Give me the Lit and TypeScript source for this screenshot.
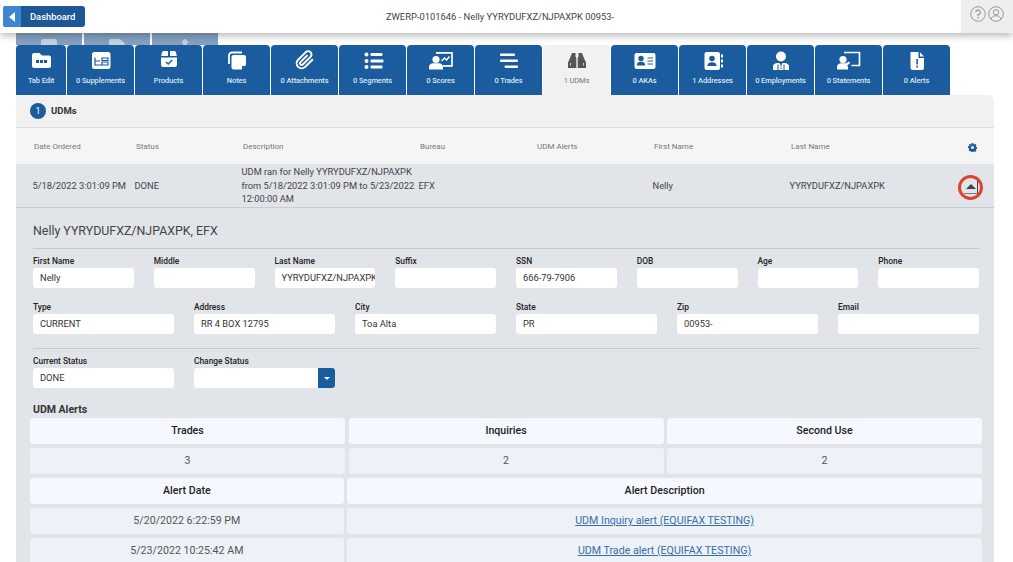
import { LitElement, html, css, svg } from "lit";
import { customElement } from "lit/decorators.js";

const B = "#1a5c9e";
const box = (c: unknown, vb = "0 0 24 20") =>
  html`<svg class="ic" viewBox=${vb} width="24" height="20" fill="#fff">${c}</svg>`;

const icons: Record<string, unknown> = {
  folder: box(svg`<path d="M3 5a2 2 0 0 1 2-2h5.500l2.500 2.500h7a2 2 0 0 1 2 2V16a2 2 0 0 1-2 2H5a2 2 0 0 1-2-2Z"/><g fill="${B}"><rect x="7" y="10" width="3" height="3"/><rect x="11" y="10" width="3" height="3"/><rect x="15" y="10" width="3" height="3"/></g>`),
  supp: box(svg`<rect x="3" y="2" width="18.500" height="17" rx="2.500"/><path d="M6 7.500V15h12.500M6 11h5M13 8h6v2.500h-6ZM13 12h6v3h-6Z" fill="none" stroke="${B}" stroke-width="1.200"/>`),
  box: box(svg`<path d="M6.500 1H11v5H4.200L5 2.500A2 2 0 0 1 6.500 1ZM13 1h4.500A2 2 0 0 1 19 2.500l.8 3.500H13Z"/><path d="M4 7.500h16V15a2 2 0 0 1-2 2H6a2 2 0 0 1-2-2Z"/><path d="M9 12l2.200 2 4-4" fill="none" stroke="${B}" stroke-width="1.400"/>`),
  notes: box(svg`<path d="M4 14V5.500A3 3 0 0 1 7 2.500h10" fill="none" stroke="#fff" stroke-width="1.800"/><path d="M8.500 5H19a2 2 0 0 1 2 2v8l-4.500 4.500H8.500a2 2 0 0 1-2-2V7a2 2 0 0 1 2-2Z"/><path d="M17 16h3.500L17 19.500Z" fill="${B}"/>`),
  clip: html`<svg class="ic" viewBox="0 0 24 24" width="20" height="20" fill="none" stroke="#fff" stroke-width="2.400"><path d="M21.440 11.050l-9.190 9.190a6 6 0 0 1-8.490-8.490l9.190-9.190a4 4 0 0 1 5.660 5.660l-9.200 9.190a2 2 0 0 1-2.830-2.830l8.490-8.480"/></svg>`,
  list: box(svg`<circle cx="5.500" cy="4.500" r="2"/><circle cx="5.500" cy="11" r="2"/><circle cx="5.500" cy="17" r="2"/><rect x="9.500" y="3" width="12" height="3" rx="1"/><rect x="9.500" y="9.500" width="13" height="3" rx="1"/><rect x="9.500" y="15.500" width="12" height="3" rx="1"/>`),
  scores: box(svg`<path d="M8 4V2.800h15v13h-9" fill="none" stroke="#fff" stroke-width="1.700"/><path d="M12.500 11l3-3 2 2 3-3.500" fill="none" stroke="#fff" stroke-width="1.400"/><circle cx="7" cy="9.500" r="3.600"/><path d="M0 19.500V17c0-2.500 2-3.800 4-3.800h6c2 0 4 1.300 4 3.800v2.500Z"/>`),
  trades: box(svg`<rect x="3" y="3.500" width="15" height="2.600" rx="1"/><rect x="3" y="9.500" width="18" height="2.600" rx="1"/><rect x="7.500" y="15.500" width="13.500" height="2.600" rx="1"/>`),
  binoc: html`<svg class="ic" viewBox="0 0 24 20" width="24" height="20" fill="#555"><path d="M7 3h3.500v3.500l.8 1.500v10H3v-5.500L5.500 7Z"/><path d="M17 3h-3.500v3.500l-.8 1.500v10H21v-5.500L18.500 7Z"/><path d="M5.500 13v2.500M18.500 13v2.500" stroke="#f1f1f1" stroke-width=".8"/></svg>`,
  card: box(svg`<rect x="1.500" y="3" width="21" height="16" rx="2"/><circle cx="8" cy="8.500" r="2.700" fill="${B}"/><path d="M3.800 15.500c0-3 1.800-3.800 4.200-3.800s4.200.8 4.200 3.800Z" fill="${B}"/><path d="M14.500 8h5.500M14.500 11h5.500M14.500 14h5.500" stroke="${B}" stroke-width="1.100"/>`),
  book: box(svg`<rect x="3.500" y="2" width="15.500" height="18" rx="2"/><rect x="20" y="4.500" width="2" height="3"/><rect x="20" y="9.500" width="2" height="3"/><rect x="20" y="14.500" width="2" height="3"/><circle cx="11" cy="8.500" r="2.800" fill="${B}"/><path d="M6.500 16c0-3 2-3.800 4.500-3.800s4.500.8 4.500 3.800Z" fill="${B}"/>`),
  emp: box(svg`<circle cx="12" cy="6.500" r="5"/><path d="M4 20v-3c0-3 2-4 5-4h6c3 0 5 1 5 4v3Z"/><path d="M9 14.500V20M15 14.500V20" stroke="${B}" stroke-width="1"/><path d="M10.500 13h3l-1 2 .7 4h-2.400l.7-4Z" fill="${B}"/><path d="M11.500 15.500h1l.4 3h-1.800Z"/>`),
  stmt: box(svg`<path d="M8 3.500V2.500h14.500v13h-8" fill="none" stroke="#fff" stroke-width="1.700"/><circle cx="6" cy="9.500" r="3.600"/><path d="M0 19.500V17c0-2.500 2-3.800 4-3.800h5l3-1.700 1.200 1.500-3 2.600c.5.500.8 1 .8 1.400v2.500Z"/>`),
  alert: box(svg`<path d="M5.500 2h8v6h5.500v10a2 2 0 0 1-2 2H7.500a2 2 0 0 1-2-2Z"/><path d="M15 2.200l4 4.300h-4Z"/><rect x="11.300" y="9" width="1.600" height="5.500" fill="${B}"/><rect x="11.300" y="15.700" width="1.600" height="1.800" fill="${B}"/>`),
};

const tabs = [
  ["folder", "Tab Edit"], ["supp", "0 Supplements"], ["box", "Products"], ["notes", "Notes"],
  ["clip", "0 Attachments"], ["list", "0 Segments"], ["scores", "0 Scores"], ["trades", "0 Trades"],
  ["binoc", "1 UDMs"], ["card", "0 AKAs"], ["book", "1 Addresses"], ["emp", "0 Employments"],
  ["stmt", "0 Statements"], ["alert", "0 Alerts"],
];

const row1 = [["First Name", "Nelly"], ["Middle", ""], ["Last Name", "YYRYDUFXZ/NJPAXPK"], ["Suffix", ""], ["SSN", "666-79-7906"], ["DOB", ""], ["Age", ""], ["Phone", ""]];
const row2 = [["Type", "CURRENT"], ["Address", "RR 4 BOX 12795"], ["City", "Toa Alta"], ["State", "PR"], ["Zip", "00953-"], ["Email", ""]];

@customElement("app-root")
export class AppRoot extends LitElement {
  static styles = css`
    :host { display: block; height: 562px; overflow: hidden; background: #fff; font-family: Roboto, "Liberation Sans", sans-serif; color: #444; }
    * { box-sizing: border-box; }
    .top { position: relative; z-index: 2; height: 33px; display: grid; grid-template-columns: 88px 1fr 52px; background: #fff; box-shadow: 0 2px 8px rgba(0,0,0,.32); }
    .dash { margin: 6px 0 0 3px; width: 82px; height: 21px; border-radius: 3px; overflow: hidden; display: flex; background: #1c5897; color: #fff; font-size: 9.400px; font-weight: 500; align-items: center; }
    .dash i { width: 18px; height: 21px; background: #3e86d0; display: flex; align-items: center; justify-content: center; margin-right: 9px; }
    .dash b { width: 0; height: 0; border: 5px solid transparent; border-left: 0; border-right: 6px solid #fff; }
    .ttl { padding-right: 49px; text-align: center; line-height: 33px; font-size: 9.400px; color: #444; }
    .acts { background: #eee; display: flex; justify-content: flex-end; align-items: flex-start; gap: 2px; padding: 6px 9px 0 0; }
    .back { height: 12px; margin-left: 16px; display: flex; gap: 2px; overflow: hidden; }
    .back div { width: 66px; height: 20px; background: #84a1c1; display: flex; justify-content: center; padding-top: 5.500px; }
    .back span { width: 16px; height: 14px; background: #c3d0df; border-radius: 2px; }
    .back div:nth-child(2) span { clip-path: polygon(0 0, 65% 0, 100% 35%, 100% 100%, 0 100%); }
    .back div:nth-child(3) span { width: 14px; border-radius: 0; clip-path: polygon(50% 0, 80% 30%, 65% 30%, 65% 100%, 35% 100%, 35% 30%, 20% 30%); }
    .tabs { margin-left: 16px; height: 50px; display: flex; gap: 1px; }
    .tab { width: 67px; height: 50px; border-radius: 4px 4px 0 0; background: #1a5c9e; color: #dbe6f1; font-size: 7.500px; letter-spacing: -.1px; font-weight: 500; display: flex; flex-direction: column; align-items: center; padding-top: 5px; }
    .tab:first-child { width: 50px; }
    .tab.on { background: #f1f1f1; color: #777; font-weight: 400; }
    .tab span { margin-top: 5.500px; line-height: 10px; white-space: nowrap; }
    .ic { display: block; }
    .panel { margin-left: 16px; width: 978px; background: #f1f1f1; border-radius: 0 6px 0 0; }
    .phead { height: 33px; border-bottom: 1px solid #ddd; display: flex; align-items: center; padding: 0 0 1px 14px; gap: 5px; font-size: 9.500px; font-weight: 700; color: #333; }
    .badge { width: 16px; height: 16px; border-radius: 50%; background: #1a5c9e; color: #fff; font-size: 9px; font-weight: 400; display: flex; align-items: center; justify-content: center; }
    .cols { display: grid; grid-template-columns: 102px 107px 177px 117px 117px 137px 1fr; padding-left: 16.500px; align-items: center; }
    .thead { height: 36px; background: #f5f5f5; font-size: 8px; color: #777; }
    .thead div { padding-left: 1.500px; }
    .gear { position: relative; }
    .gear svg { position: absolute; right: 17px; top: 1px; }
    .row { position: relative; height: 44px; background: #e1e4e9; border-bottom: 1px solid #c9cdd3; font-size: 9.300px; line-height: 13.700px; color: #444; }
    .desc { white-space: nowrap; }
    .ring { position: absolute; left: 942px; top: 11px; width: 25px; height: 25px; border: 3.500px solid #e0402f; border-radius: 50%; display: flex; align-items: center; justify-content: center; }
    .ring i { width: 14px; height: 13px; border-right: 1px solid #444; border-bottom: 1px solid #777; display: flex; align-items: center; justify-content: center; margin: 0 -1px 0 0; padding-bottom: 2px; flex: none; }
    .ring b { width: 0; height: 0; border: 5.500px solid transparent; border-top: 0; border-bottom: 5px solid #444; }
    .detail { background: #e1e4e9; height: 360px; padding: 14px 15px 0 17px; }
    h2 { margin: 0 0 8px; font-size: 12.400px; line-height: 18px; font-weight: 400; color: #444; }
    hr { margin: 0; border: 0; height: 1px; background: #c6cad0; }
    .g8 { display: grid; grid-template-columns: repeat(8, 1fr); gap: 14px 20px; margin-top: 7px; }
    .g6 { display: grid; grid-template-columns: repeat(6, 1fr); gap: 14px 20px; margin: 14px 0; }
    .g2 { display: grid; grid-template-columns: repeat(6, 1fr); gap: 14px 20px; margin-top: 7px; }
    label { display: block; font-size: 8.400px; line-height: 11px; margin-bottom: 1px; font-weight: 500; color: #222; white-space: nowrap; }
    input { display: block; width: 100%; height: 20px; border: 0; border-radius: 3px; background: #fff; padding: 0 0 1px 7px; font: 400 9.300px Roboto, sans-serif; color: #333; outline: 0; }
    .sel { position: relative; height: 20px; border-radius: 3px; background: #fff; overflow: hidden; }
    .sel i { position: absolute; right: 0; top: 0; width: 17px; height: 20px; background: #1a5c9e; display: flex; align-items: center; justify-content: center; }
    .sel b { width: 0; height: 0; border: 3.500px solid transparent; border-bottom: 0; border-top: 3.500px solid #fff; }
    h3 { margin: 15.500px 0 2px; font-size: 10.500px; line-height: 12px; font-weight: 700; color: #333; }
    .t3, .t2 { display: grid; gap: 3.500px; margin: 0 -3px 3.500px; }
    .t3 { grid-template-columns: repeat(3, 1fr); }
    .t2 { grid-template-columns: 313.700px 1fr; }
    .c { height: 26.500px; border-radius: 3px; display: flex; align-items: center; justify-content: center; font-size: 10.650px; background: #edf1f8; color: #555; }
    .h { background: #f5f9ff; color: #222; font-weight: 500; }
    a { color: #3a6ea5; text-decoration: underline; }
  `;

  field(f: string[]) {
    return html`<div><label>${f[0]}</label><input readonly .value=${f[1]} /></div>`;
  }

  render() {
    return html`
      <div class="top">
        <div class="dash"><i><b></b></i>Dashboard</div>
        <div class="ttl">ZWERP-0101646 - Nelly YYRYDUFXZ/NJPAXPK 00953-</div>
        <div class="acts">
          <svg viewBox="0 0 16 16" width="16" height="16" fill="none" stroke="#999" stroke-width="1"><circle cx="8" cy="8" r="7.300"/><path d="M5.800 6.300A2.200 2.200 0 1 1 8 8.600v1.600" stroke-width="1.200"/><circle cx="8" cy="12" r=".8" fill="#999" stroke="none"/></svg>
          <svg viewBox="0 0 16 16" width="16" height="16" fill="none" stroke="#999" stroke-width="1"><circle cx="8" cy="8" r="7.300"/><circle cx="8" cy="6.300" r="2.700"/><path d="M3.300 13c.5-2.400 2.300-3.300 4.700-3.300s4.200.9 4.700 3.300"/></svg>
        </div>
      </div>
      <div class="back"><div><span></span></div><div><span></span></div><div><span></span></div></div>
      <div class="tabs">
        ${tabs.map((t) => html`<div class="tab ${t[0] === "binoc" ? "on" : ""}">${icons[t[0]]}<span>${t[1]}</span></div>`)}
      </div>
      <div class="panel">
        <div class="phead"><span class="badge">1</span>UDMs</div>
        <div class="cols thead">
          <div>Date Ordered</div><div>Status</div><div>Description</div><div>Bureau</div><div>UDM Alerts</div><div>First Name</div>
          <div class="gear">Last Name
            <svg viewBox="0 0 16 16" width="9" height="9" fill="${B}"><path fill-rule="evenodd" d="M6.500 0h3l.4 2.200 1.300.6L13 1.500l2 2.200-1.200 1.800.5 1.300 2.200.4v3l-2.200.4-.5 1.300 1.200 1.800-2 2.200-1.800-1.300-1.300.6-.4 2.200h-3l-.4-2.200-1.300-.6L3 14.500l-2-2.200 1.200-1.800-.5-1.300L0 8.800v-3l2.200-.4.5-1.300L1.500 2.300 3 1.500l1.800 1.300 1.300-.6ZM8 5.200a2.800 2.800 0 1 0 0 5.600 2.800 2.800 0 0 0 0-5.600Z"/></svg>
          </div>
        </div>
        <div class="cols row">
          <div>5/18/2022 3:01:09 PM</div><div>DONE</div>
          <div class="desc">UDM ran for Nelly YYRYDUFXZ/NJPAXPK<br />from 5/18/2022 3:01:09 PM to 5/23/2022<br />12:00:00 AM</div>
          <div>EFX</div><div></div><div>Nelly</div><div>YYRYDUFXZ/NJPAXPK</div>
          <div class="ring"><i><b></b></i></div>
        </div>
        <div class="detail">
          <h2>Nelly YYRYDUFXZ/NJPAXPK, EFX</h2>
          <hr />
          <div class="g8">${row1.map((f) => this.field(f))}</div>
          <div class="g6">${row2.map((f) => this.field(f))}</div>
          <hr />
          <div class="g2">
            ${this.field(["Current Status", "DONE"])}
            <div><label>Change Status</label><div class="sel"><i><b></b></i></div></div>
          </div>
          <h3>UDM Alerts</h3>
          <div class="t3">
            <div class="c h">Trades</div><div class="c h">Inquiries</div><div class="c h">Second Use</div>
            <div class="c">3</div><div class="c">2</div><div class="c">2</div>
          </div>
          <div class="t2">
            <div class="c h">Alert Date</div><div class="c h">Alert Description</div>
            <div class="c">5/20/2022 6:22:59 PM</div><div class="c"><a>UDM Inquiry alert (EQUIFAX TESTING)</a></div>
            <div class="c">5/23/2022 10:25:42 AM</div><div class="c"><a>UDM Trade alert (EQUIFAX TESTING)</a></div>
          </div>
        </div>
      </div>
    `;
  }
}
